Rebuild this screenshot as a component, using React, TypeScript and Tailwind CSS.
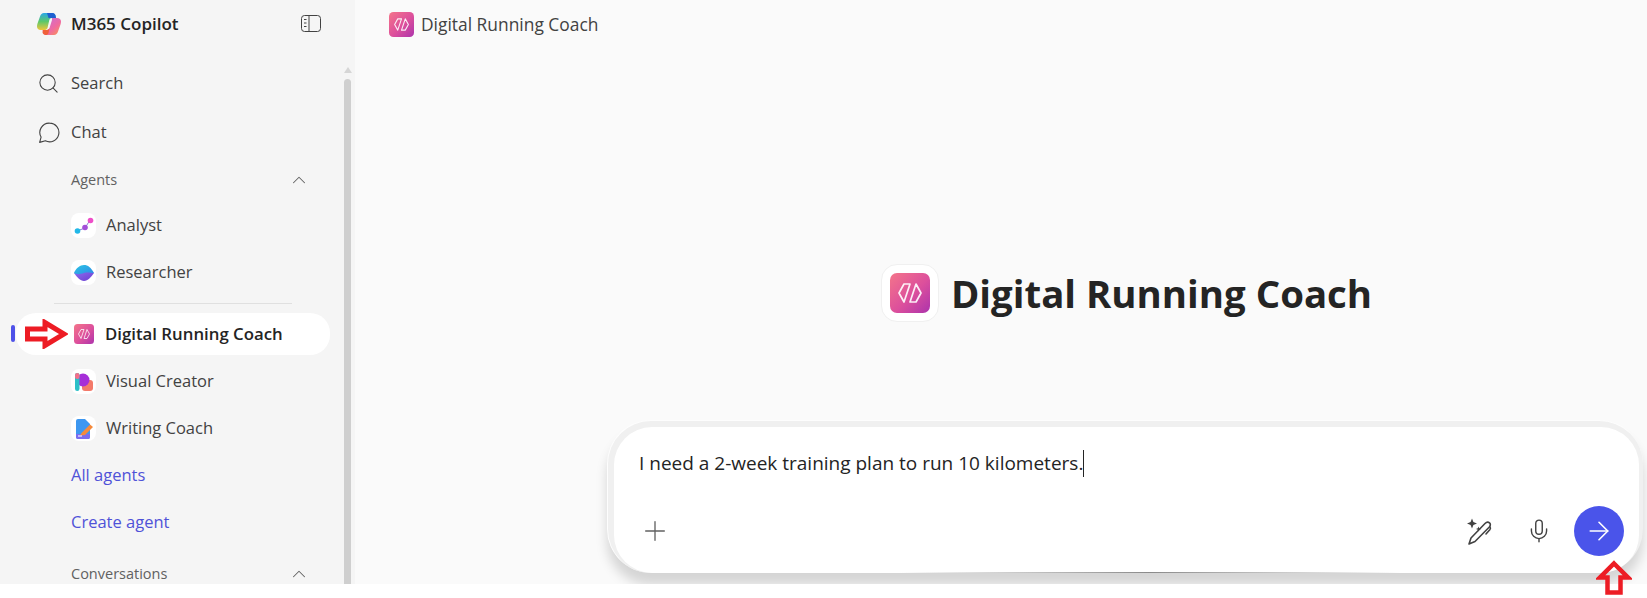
import { ArrowRight, ChevronUp, Mic, Plus, Search } from "lucide-react";
import type { ReactNode } from "react";

const CoachGlyph = ({ className }: { className?: string }) => (
  <svg viewBox="0 0 40 40" className={className}>
    <defs>
      <linearGradient id="coachBg" x1="0" y1="0" x2="1" y2="1">
        <stop offset="0" stopColor="#f4758a" />
        <stop offset="0.55" stopColor="#dc4f9c" />
        <stop offset="1" stopColor="#ac33ac" />
      </linearGradient>
    </defs>
    <rect width="40" height="40" rx="7" fill="url(#coachBg)" />
    <path
      d="M20 11h-6L9 20l5 9zM26 11l5 9-5 9h-6z"
      fill="none"
      stroke="#fff"
      strokeOpacity="0.9"
      strokeWidth="1.700"
      strokeLinejoin="round"
    />
  </svg>
);

const CopilotLogo = () => (
  <svg viewBox="0 0 24 22" className="h-[22px] w-[24px]">
    <defs>
      <linearGradient id="cpLeft" x1="0" y1="0" x2="0" y2="1">
        <stop offset="0" stopColor="#2aa8e8" />
        <stop offset="0.5" stopColor="#5cc86a" />
        <stop offset="1" stopColor="#f0c63a" />
      </linearGradient>
      <linearGradient id="cpRight" x1="0" y1="0" x2="1" y2="1">
        <stop offset="0" stopColor="#c06fe0" />
        <stop offset="0.6" stopColor="#f06aa0" />
        <stop offset="1" stopColor="#fb9a4a" />
      </linearGradient>
    </defs>
    <path d="M7 0h8.500c1.500 0 2.500 1 3 2.500L19 5h-4c-1.500 0-2.300.9-2.700 2L10.500 15c-.5 1.500-2 2-3 2H3.500C1.500 17 0 15.500 0 13.500c0-1 .2-2 .5-3L3 3.500C3.700 1.300 5 0 7 0z" fill="url(#cpLeft)" />
    <path d="M10 0h5.500c1.500 0 2.500 1 3 2.500L19 5h-7.500z" fill="#1f5fd0" />
    <path d="M15 5h5c2.500 0 4 1.500 4 3.500 0 1-.2 2-.5 3L21 18.500c-.7 2.200-2 3.500-4 3.500H9c-1.500 0-2.500-1-3-2.500L5.500 17H9c1.500 0 3-.5 3.500-2L15 7z" fill="url(#cpRight)" />
    <path d="M6 17h3c1.500 0 3-.5 3.500-2l-1 5c-.5 1.500-1.500 2-3 2-1.500 0-2.500-1-3-2.500z" fill="#f0603a" />
  </svg>
);

const PanelIcon = () => (
  <svg viewBox="0 0 20 20" className="h-[20px] w-[20px]" fill="none" stroke="#424242" strokeWidth="1">
    <rect x="0.500" y="1.500" width="19" height="16" rx="3" />
    <path d="M8 2v15M3 5.500h2.500M3 9h2.500M3 12.500h2.500" />
  </svg>
);

const ChatIcon = () => (
  <svg viewBox="0 0 20 20" className="h-[22px] w-[22px]" fill="none" stroke="#424242" strokeWidth="1">
    <path d="M10.500 1a8.500 8.500 0 1 1-3.800 16.100L1.500 18.500l1.300-4.800A8.500 8.500 0 0 1 10.500 1z" strokeLinejoin="round" />
  </svg>
);

const AnalystIcon = () => (
  <svg viewBox="0 0 20 20" className="h-[20px] w-[20px]">
    <path d="M3 15l8-3 5-8" stroke="#8a7fd0" strokeWidth="1" fill="none" />
    <circle cx="3.500" cy="15" r="2.800" fill="#22b8e8" />
    <circle cx="11" cy="11.500" r="2.800" fill="#a44fd8" />
    <circle cx="16.500" cy="4.500" r="2.800" fill="#ee4fc8" />
  </svg>
);

const ResearcherIcon = () => (
  <svg viewBox="0 0 20 20" className="h-[20px] w-[20px]">
    <defs>
      <linearGradient id="resTop" x1="0" y1="0" x2="1" y2="1">
        <stop offset="0" stopColor="#2cc6e4" />
        <stop offset="1" stopColor="#2f8ae8" />
      </linearGradient>
      <linearGradient id="resBottom" x1="0" y1="0" x2="1" y2="1">
        <stop offset="0" stopColor="#8f6bf0" />
        <stop offset="1" stopColor="#6a3fd0" />
      </linearGradient>
    </defs>
    <path d="M0 10C3 14 6 18 10 18s7-4 10-8c-3-2-17-2-20 0z" fill="url(#resBottom)" />
    <path d="M0 10C2 5 6 2 10 2c4 0 7 2.500 10 8-4 0-6-1-10 0-4 1-6.500 2-10 0z" fill="url(#resTop)" />
  </svg>
);

const VisualIcon = () => (
  <svg viewBox="0 0 20 20" className="h-[20px] w-[20px]">
    <rect x="8" y="8" width="11" height="11" rx="3" fill="#f47a6a" />
    <circle cx="9" cy="8" r="6.500" fill="#a62fd8" />
    <rect x="1" y="1" width="4.500" height="18" rx="2.200" fill="#2cc0c8" />
    <rect x="1" y="1" width="4.500" height="6" rx="2.200" fill="#f2708a" />
  </svg>
);

const WritingIcon = () => (
  <svg viewBox="0 0 20 20" className="h-[20px] w-[20px]">
    <path d="M2 2a2 2 0 0 1 2-2h7l5 5v13a2 2 0 0 1-2 2H4a2 2 0 0 1-2-2z" fill="#3d97f0" />
    <path d="M2 15h14v3a2 2 0 0 1-2 2H4a2 2 0 0 1-2-2z" fill="#7a6cf0" />
    <path d="M6 16.500l2-3 8-8 3 2.500-8 8z" fill="#f58a3c" />
    <rect x="4" y="16.500" width="4" height="1" fill="#fff" />
  </svg>
);

const SparklePenIcon = () => (
  <svg viewBox="0 0 28 28" className="h-[28px] w-[28px]" fill="none" stroke="#424242" strokeWidth="1.600" strokeLinejoin="round" strokeLinecap="round">
    <path d="M3 27l2-6L19 6.500c1.400-1.500 3.200-1.800 4.500-.7 1.300 1.200 1 3-.4 4.500L9 24.500z" />
    <path d="M20 17l3.800-4.200c.8-1 .8-2 .2-2.800" />
    <path d="M6 1.500l1.400 3.600L11 6.500 7.400 7.900 6 11.500 4.600 7.900 1 6.500l3.600-1.400z" fill="#424242" stroke="none" />
    <path d="M12.500 9.500l.7 1.800 1.800.7-1.800.7-.7 1.800-.7-1.800-1.800-.7 1.800-.7z" fill="#424242" stroke="none" />
  </svg>
);

const RedArrowRight = ({ className }: { className?: string }) => (
  <svg viewBox="0 0 43 30" className={className} fill="none" stroke="#ed1c24" strokeWidth="5">
    <path d="M2.500 10H20V3.500L39 15 20 26.500V20H2.500z" />
  </svg>
);

const RedArrowUp = ({ className }: { className?: string }) => (
  <svg viewBox="0 0 36 35" className={className} fill="none" stroke="#ed1c24" strokeWidth="4.500">
    <path d="M18 3.500L32 17.500H24.500V32.500H11.500V17.500H4z" />
  </svg>
);

const NavRow = ({ icon, label }: { icon: ReactNode; label: string }) => (
  <div className="flex h-[49px] items-center gap-[11px] pl-[37px] text-[16.500px] text-[#424242]">
    <span className="flex w-[23px] justify-center">{icon}</span>
    {label}
  </div>
);

const AgentRow = ({ icon, label }: { icon: ReactNode; label: string }) => (
  <div className="flex h-[47px] items-center gap-[10px] pl-[71px] text-[16.500px] text-[#424242]">
    <span className="flex h-[25px] w-[25px] items-center justify-center rounded-[8px] bg-white">{icon}</span>
    {label}
  </div>
);

const SectionLabel = ({ label, height }: { label: string; height: string }) => (
  <div className={`flex items-center justify-between pl-[71px] pr-[34px] text-[14.500px] text-[#616161] ${height}`}>
    {label}
    <ChevronUp className="h-[22px] w-[22px] text-[#616161]" strokeWidth={1.100} />
  </div>
);

export default function App() {
  return (
    <div className="relative h-[598px] w-[1647px] overflow-hidden bg-white font-['Open_Sans','Noto_Sans',sans-serif]">
      <div className="flex h-[584px] overflow-hidden">
        {/* sidebar */}
        <aside className="flex w-[355px] shrink-0 bg-[#f5f5f5]">
          <div className="w-[344px] shrink-0">
            <div className="flex h-[48px] items-center justify-between pl-[37px] pr-[23px]">
              <div className="flex items-center gap-[10px]">
                <CopilotLogo />
                <span className="text-[17px] font-semibold text-[#242424]">M365 Copilot</span>
              </div>
              <PanelIcon />
            </div>
            <div className="mt-[11px]">
              <NavRow icon={<Search className="h-[23px] w-[23px] text-[#424242]" strokeWidth={1.100} />} label="Search" />
              <NavRow icon={<ChatIcon />} label="Chat" />
            </div>
            <SectionLabel label="Agents" height="h-[45px]" />
            <AgentRow icon={<AnalystIcon />} label="Analyst" />
            <AgentRow icon={<ResearcherIcon />} label="Researcher" />
            <div className="mb-[9px] ml-[54px] mt-[7px] h-px w-[238px] bg-[#e0e0e0]" />
            <div className="relative ml-[16px] flex h-[42px] w-[314px] items-center gap-[11px] rounded-[20px] bg-white pl-[58px] text-[16.800px] font-semibold text-[#242424]">
              <span className="absolute left-[-5px] top-[12px] h-[17px] w-[4px] rounded-full bg-[#4f52e8]" />
              <RedArrowRight className="absolute left-[9px] top-[6px] h-[30px] w-[43px]" />
              <CoachGlyph className="h-[20px] w-[20px]" />
              Digital Running Coach
            </div>
            <div className="mt-[3px]">
              <AgentRow icon={<VisualIcon />} label="Visual Creator" />
              <AgentRow icon={<WritingIcon />} label="Writing Coach" />
              <div className="flex h-[47px] items-center pl-[71px] text-[16.500px] text-[#4f52d8]">All agents</div>
              <div className="flex h-[47px] items-center pl-[71px] text-[16.500px] text-[#4f52d8]">Create agent</div>
            </div>
            <SectionLabel label="Conversations" height="h-[56px]" />
          </div>
          {/* scrollbar */}
          <div className="flex w-[7px] flex-col items-center pt-[67px]">
            <span className="h-0 w-0 border-x-[4px] border-b-[6px] border-x-transparent border-b-[#d6d6d6]" />
            <span className="mt-[6px] w-full flex-1 rounded-t-full bg-[#cfcfcf]" />
          </div>
        </aside>

        {/* main */}
        <main className="flex min-w-0 flex-1 flex-col bg-[#fafafa]">
          <header className="flex h-[48px] items-center gap-[7px] pl-[34px] text-[17.400px] font-medium text-[#424242]">
            <CoachGlyph className="h-[25px] w-[25px]" />
            Digital Running Coach
          </header>
          <div className="flex flex-1 justify-end pr-[4px]">
            <div className="flex w-[1036px] flex-col items-center">
              <div className="mt-[215px] flex h-[60px] items-center gap-[12px] pl-[3px]">
                <span className="flex h-[58px] w-[58px] items-center justify-center rounded-[16px] border border-[#f0f0f0] bg-white">
                  <CoachGlyph className="h-[40px] w-[40px]" />
                </span>
                <h1 className="pt-[1px] text-[38.400px] font-bold text-[#242424]">Digital Running Coach</h1>
              </div>

              {/* composer */}
              <div className="mt-[97px] w-full rounded-[44px] border-l border-t border-[#fdfdfd] bg-[#f0f0f0] pl-[6px] pr-[4px] pt-[6px] shadow-[0_12px_12px_rgba(0,0,0,0.15)]">
                <div className="relative flex h-[146px] flex-col justify-between rounded-[38px] bg-white pb-[17px] pl-[25px] pr-[15px] pt-[22px]">
                  <div className="flex h-[28px] items-center text-[19px] text-[#242424]">
                    I need a 2-week training plan to run 10 kilometers.
                    <span className="h-[27px] w-px bg-[#242424]" />
                  </div>
                  <div className="flex items-center justify-between">
                    <Plus className="h-[32px] w-[32px] text-[#616161]" strokeWidth={1} />
                    <div className="flex items-center">
                      <SparklePenIcon />
                      <Mic className="ml-[32px] h-[26px] w-[26px] text-[#424242]" strokeWidth={1.300} />
                      <span className="ml-[22px] flex h-[50px] w-[50px] items-center justify-center rounded-full bg-[#4a54ea]">
                        <ArrowRight className="h-[30px] w-[30px] text-white" strokeWidth={1.300} />
                      </span>
                    </div>
                  </div>
                  <span className="absolute bottom-0 left-[286px] right-[239px] h-px bg-gradient-to-r from-transparent via-[#8a8a8a] to-transparent" />
                </div>
              </div>
            </div>
          </div>
        </main>
      </div>
      {/* red marker under the send button */}
      <RedArrowUp className="absolute left-[1596px] top-[560px] h-[35px] w-[36px]" />
    </div>
  );
}
